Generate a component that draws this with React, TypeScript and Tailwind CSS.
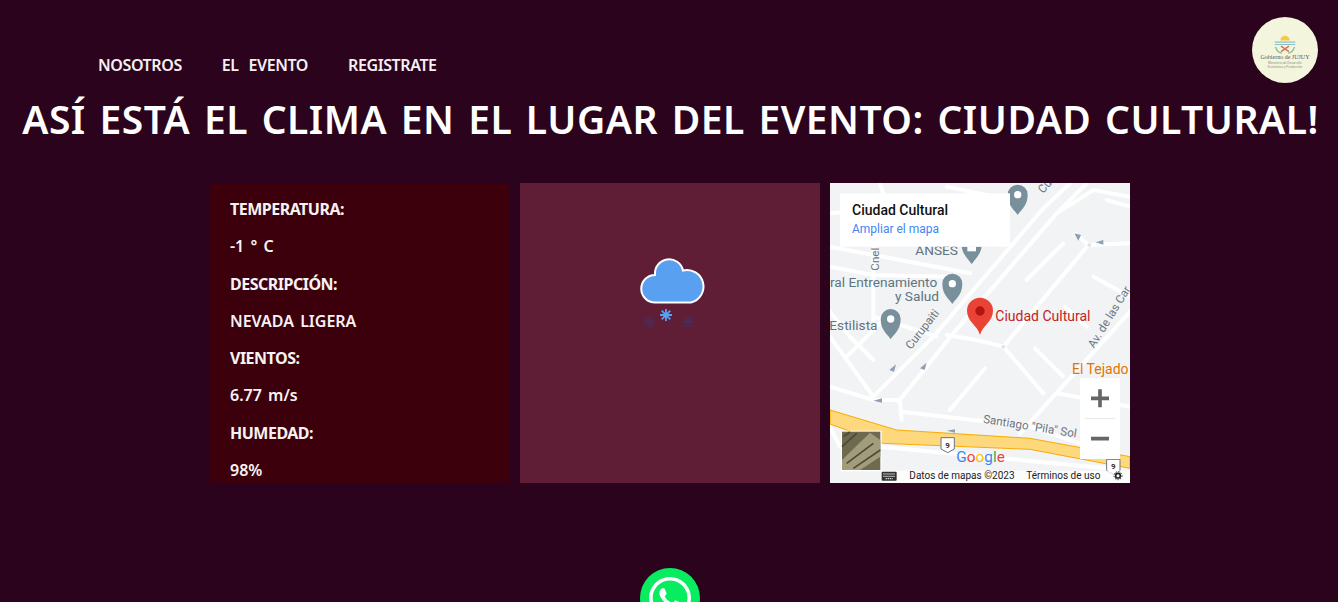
import { FaWhatsapp } from "react-icons/fa";

const font = { fontFamily: '"Noto Sans", sans-serif' };

const rows = [
  { label: "TEMPERATURA:", value: "-1 ° C" },
  { label: "DESCRIPCIÓN:", value: "NEVADA LIGERA" },
  { label: "VIENTOS:", value: "6.77 m/s" },
  { label: "HUMEDAD:", value: "98%" },
];

const roads = [
  "M130 650 L310 470 L640 85 L720 10",
  "M205 665 L370 460 L680 100 L770 10",
  "M350 465 Q450 480 520 500 L640 640",
  "M520 500 L775 195 L900 190",
  "M775 195 L735 160",
  "M680 100 L790 30 L900 50",
  "M590 300 L700 190",
  "M790 290 L900 350",
  "M615 505 L700 590",
  "M360 690 L465 565",
  "M570 760 L900 395",
  "M215 695 L600 740 L750 790",
  "M0 620 L130 660 L210 660 L215 720",
  "M0 470 L130 650",
  "M50 530 L150 430",
  "M130 200 L130 420",
  "M130 410 L320 470",
  "M0 260 L130 285 L350 290",
  "M0 200 L420 280",
  "M0 100 L540 60",
  "M150 10 L175 90",
  "M680 640 L900 680",
  "M150 800 L830 865",
  "M0 740 L30 800",
  "M830 60 L900 80",
  "M0 395 L60 470 L130 540",
  "M350 20 L540 60",
  "M705 380 L770 440",
];

function Pin({ x, y }: { x: number; y: number }) {
  return (
    <g transform={`translate(${x} ${y})`}>
      <path d="M0 33 C-6 20 -30 8 -30 -28 A30 30 0 0 1 30 -28 C30 8 6 20 0 33Z" fill="#78909c" />
      <circle cx="0" cy="-28" r="11" fill="#fff" />
    </g>
  );
}

function MapDrawing() {
  return (
    <svg viewBox="0 9 900 900" className="block h-[300px] w-[300px]">
      <rect x="0" y="0" width="900" height="920" fill="#f1f3f4" />
      <g fill="none" stroke="#fff" strokeLinecap="round" strokeWidth="12">
        {roads.map((d) => (
          <path key={d} d={d} />
        ))}
      </g>
      <circle cx="520" cy="500" r="6" fill="#e3e6e8" />
      <circle cx="778" cy="195" r="6" fill="#e3e6e8" />
      <path d="M0 690 L200 750 L600 775 L900 830 L900 865 L600 808 L160 790 L0 732Z" fill="#fdd87d" stroke="#f9ab00" strokeWidth="3" />
      <g fill="#8e9fb5">
        <path d="M178 570 L198 553 L192 575Z" />
        <path d="M270 565 L290 548 L284 570Z" />
        <path d="M130 662 L156 655 L156 668Z" />
        <path d="M350 752 L375 748 L375 758Z" />
        <path d="M733 160 L753 165 L745 182Z" />
        <path d="M797 187 L820 180 L820 194Z" />
      </g>
      <Pin x={563} y={72} />
      <Pin x={367} y={339} />
      <Pin x={182} y={445} />
      <path d="M395 200 H455 C452 222 434 240 425 252 C416 240 398 222 395 200Z" fill="#78909c" />
      <path d="M412 200 H438 V214 H412Z" fill="#fff" />
      <path d="M450 465 C442 435 411 425 411 392 A39 39 0 0 1 489 392 C489 425 458 435 450 465Z" fill="#ea4335" />
      <circle cx="450" cy="393" r="14" fill="#b31412" />
      <g style={{ fontFamily: "Roboto, sans-serif" }} fontSize="41">
        <text x="256" y="224" fill="#5f7480">ANSES</text>
        <text x="0" y="320" fill="#5f7480">ral Entrenamiento</text>
        <text x="195" y="362" fill="#5f7480">y Salud</text>
        <text x="-2" y="449" fill="#5f7480">Estilista</text>
        <text x="496" y="422" fontSize="42" fill="#c5221f">Ciudad Cultural</text>
        <text x="726" y="581" fontSize="42" fill="#e37400">El Tejado</text>
        <text fontSize="35" fill="#6b7480" transform="translate(243 510) rotate(-52)">Curupaiti</text>
        <text fontSize="35" fill="#6b7480" transform="translate(146 272) rotate(-90)">Cnel</text>
        <text fontSize="35" fill="#6b7480" transform="translate(792 506) rotate(-58)">Av. de las Car</text>
        <text fontSize="35" fill="#6b7480" transform="translate(458 728) rotate(9)">Santiago "Pila" Sol</text>
        <text fontSize="35" fill="#6b7480" transform="translate(640 42) rotate(-50)">Cu</text>
      </g>
      <g>
        <path d="M333 773 H373 V807 L353 818 L333 807Z" fill="#fff" stroke="#6b7480" strokeWidth="3" />
        <text x="353" y="804" textAnchor="middle" fontSize="24" fontFamily="Roboto, sans-serif" fontWeight="700" fill="#333">9</text>
        <path d="M830 838 H870 V872 L850 883 L830 872Z" fill="#fff" stroke="#6b7480" strokeWidth="3" />
        <text x="850" y="868" textAnchor="middle" fontSize="24" fontFamily="Roboto, sans-serif" fontWeight="700" fill="#333">9</text>
      </g>
      <text x="379" y="846" fontSize="46" fontFamily="Roboto, sans-serif">
        <tspan fill="#4285f4">G</tspan>
        <tspan fill="#ea4335">o</tspan>
        <tspan fill="#fbbc05">o</tspan>
        <tspan fill="#4285f4">g</tspan>
        <tspan fill="#34a853">l</tspan>
        <tspan fill="#ea4335">e</tspan>
      </text>
      <rect x="33" y="752" width="122" height="122" fill="#fff" />
      <rect x="36" y="755" width="115" height="115" fill="#6d6a50" />
      <path d="M36 840 L120 758 L151 780 L151 830 L90 870 L36 870Z" fill="#a39c7c" />
      <path d="M36 800 L80 760 M50 850 L130 790 M70 865 L151 810 M40 770 L60 756" stroke="#4c4a36" strokeWidth="5" fill="none" />
      <rect x="155" y="872" width="745" height="37" fill="#fff" fillOpacity="0.75" />
      <rect x="155" y="875" width="45" height="27" rx="3" fill="#333" />
      <path d="M160 882 H195 M160 889 H195 M167 896 H188" stroke="#fff" strokeWidth="3" strokeDasharray="4 2" />
      <g fontFamily="Roboto, sans-serif" fontSize="30" fill="#222">
        <text x="238" y="897">Datos de mapas ©2023</text>
        <text x="589" y="897">Términos de uso</text>
      </g>
      <circle cx="864" cy="887" r="7" fill="none" stroke="#222" strokeWidth="5" />
      <circle cx="864" cy="887" r="12" fill="none" stroke="#222" strokeWidth="3" strokeDasharray="4 4" />
      <rect x="750" y="595" width="120" height="242" fill="#fff" />
      <path d="M765 716 H855" stroke="#e6e6e6" strokeWidth="3" />
      <path d="M783 655 H837 M810 628 V682 M783 776 H837" stroke="#666" strokeWidth="11" />
      <rect x="30" y="40" width="510" height="160" fill="#fff" />
      <text x="66" y="106" fontSize="42" fontFamily="Roboto, sans-serif" fontWeight="500" fill="#111">Ciudad Cultural</text>
      <text x="66" y="160" fontSize="36" fontFamily="Roboto, sans-serif" fill="#4285f4">Ampliar el mapa</text>
    </svg>
  );
}

function Flake({ x, y, color }: { x: number; y: number; color: string }) {
  return (
    <path
      d={`M${x - 6} ${y} H${x + 6} M${x} ${y - 6} V${y + 6} M${x - 4.3} ${y - 4.3} L${x + 4.3} ${y + 4.3} M${x - 4.3} ${y + 4.3} L${x + 4.3} ${y - 4.3}`}
      stroke={color}
      strokeWidth="1.8"
    />
  );
}

function Logo() {
  return (
    <div className="flex h-[66px] w-[66px] flex-col items-center justify-center rounded-full bg-[#f3f5dd] pt-1">
      <svg viewBox="0 0 40 24" className="h-[19px] w-[32px] blur-[0.3px]">
        <path d="M14 7 A6 6 0 0 1 26 7Z" fill="#f7c948" />
        <path d="M7 9 H33 M7 12 H33" stroke="#8cc0c8" strokeWidth="1.4" />
        <path d="M8 15 Q10 22 16 23 M32 15 Q30 22 24 23" stroke="#8fb78a" strokeWidth="1.6" fill="none" />
        <path d="M15 14 L25 21 M25 14 L15 21" stroke="#d9735c" strokeWidth="2" />
      </svg>
      <span className="text-[6px] leading-[7px] text-[#555]" style={{ fontFamily: '"Liberation Serif", serif' }}>Gobierno de JUJUY</span>
      <span className="text-[3px] leading-[4px] text-[#8a8a78]">Ministerio de Desarrollo</span>
      <span className="text-[3px] leading-[4px] text-[#8a8a78]">Económico y Producción</span>
    </div>
  );
}

export default function App() {
  return (
    <div className="h-screen overflow-hidden bg-[#2b031c] text-white" style={font}>
      <header className="flex items-start justify-between pl-[98px] pr-5 pt-[17px]">
        <nav className="flex gap-10 pt-[37px] text-[16px] font-semibold leading-[22px] tracking-[-0.4px] text-[#f4f0f2] [word-spacing:6px]">
          <a>NOSOTROS</a>
          <a>EL EVENTO</a>
          <a>REGISTRATE</a>
        </nav>
        <Logo />
      </header>
      <h1 className="mt-[6px] whitespace-nowrap pl-[3px] text-center text-[39px] font-semibold leading-[60px] tracking-[0.5px] [word-spacing:3px]">
        ASÍ ESTÁ EL CLIMA EN EL LUGAR DEL EVENTO: CIUDAD CULTURAL!
      </h1>
      <section className="mt-[34px] flex justify-center gap-[10px] pl-[2px]">
        <div className="h-[300px] w-[300px] overflow-hidden bg-[#3b000b] pl-5 pt-[8px] text-[16px] leading-[37.3px] text-[#f6f2f4]">
          {rows.map((r) => (
            <div key={r.label}>
              <p className="font-bold tracking-[-0.5px]">{r.label}</p>
              <p className="font-semibold [word-spacing:2px]">{r.value}</p>
            </div>
          ))}
        </div>
        <div className="flex h-[300px] w-[300px] justify-center bg-[#5f1e35] pt-[57px]">
          <svg viewBox="0 0 100 100" className="h-[100px] w-[100px]">
            <path d="M35 62.5 A13.75 13.75 0 0 1 35 35 A14.2 14.2 0 0 1 63 30.5 A16 16 0 0 1 71 62.5Z" fill="#5aa0f0" stroke="#fff" strokeWidth="2" />
            <Flake x={46} y={75} color="#5aa0f0" />
            <Flake x={29.5} y={82} color="#4d2a55" />
            <Flake x={68} y={82} color="#4d2a55" />
          </svg>
        </div>
        <div className="h-[300px] w-[300px] overflow-hidden">
          <MapDrawing />
        </div>
      </section>
      <div className="mt-[85px] flex justify-center pl-[2px]">
        <div className="flex h-[60px] w-[60px] items-center justify-center rounded-full bg-[#08ec5f] text-white">
          <FaWhatsapp size={48} />
        </div>
      </div>
    </div>
  );
}
